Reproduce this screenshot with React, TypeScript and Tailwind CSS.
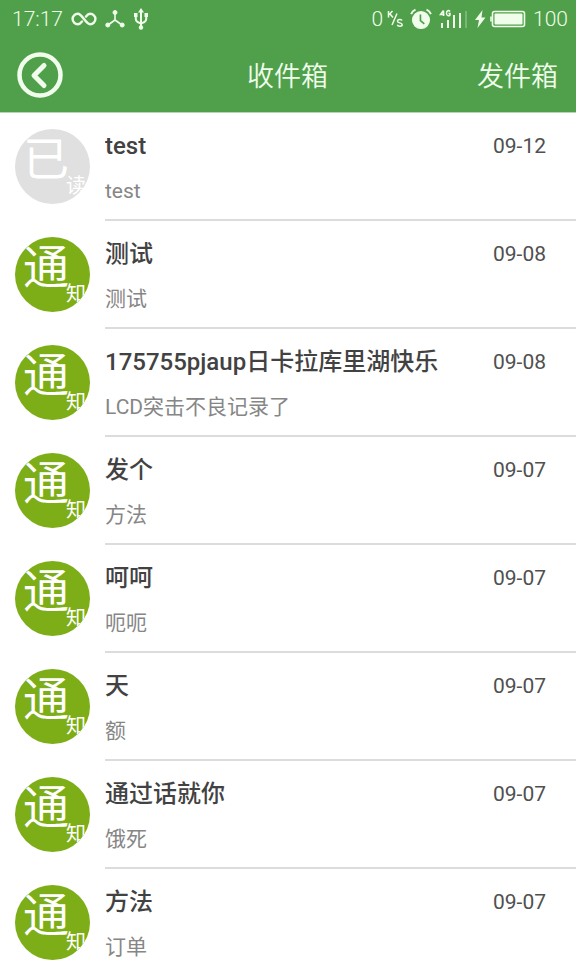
import React from 'react';

interface Message {
  id: number;
  title: string;
  content: string;
  date: string;
  read?: boolean;
}

const messages: Message[] = [
  { id: 1, title: 'test', content: 'test', date: '09-12', read: true },
  { id: 2, title: '测试', content: '测试', date: '09-08' },
  { id: 3, title: '175755pjaup日卡拉库里湖快乐', content: 'LCD突击不良记录了', date: '09-08' },
  { id: 4, title: '发个', content: '方法', date: '09-07' },
  { id: 5, title: '呵呵', content: '呃呃', date: '09-07' },
  { id: 6, title: '天', content: '额', date: '09-07' },
  { id: 7, title: '通过话就你', content: '饿死', date: '09-07' },
  { id: 8, title: '方法', content: '订单', date: '09-07' },
];

const StatusBar: React.FC = () => (
  <div className="flex h-[38px] items-center justify-between pl-3 pr-2 text-[21px] leading-6 font-light text-[#effdea]">
    <div className="flex items-center gap-2">
      <span>17:17</span>
      <svg className="h-4 w-[26px]" viewBox="0 0 26 16" fill="none" stroke="currentColor" strokeWidth="2.4" strokeLinecap="round">
        <path d="M11 10.500C9.700 12.200 8.500 13.200 6.800 13.200a5.200 5.200 0 1 1 0-10.400C11.500 2.800 14.500 13.200 19.200 13.200a5.200 5.200 0 1 0 0-10.400C17.500 2.800 16.300 3.800 15 5.500" />
      </svg>
      <svg className="h-5 w-5" viewBox="0 0 20 20" fill="currentColor" stroke="currentColor">
        <path d="M10 4v7M10 11L3 16M10 11l7 5" fill="none" strokeWidth="1.6" />
        <circle cx="10" cy="3.500" r="2" />
        <circle cx="2.800" cy="16" r="2" />
        <circle cx="17.200" cy="16" r="2" />
      </svg>
      <svg className="h-6 w-4" viewBox="0 0 16 24" fill="none" stroke="currentColor" strokeWidth="2">
        <path d="M8 4v16M2.800 8v4c0 3 2.500 3.500 5.200 4.500M13.200 8v4c0 3-2.500 3.500-5.200 4.500" />
        <path d="M8 1l3 4.500H5zM1 6h3.500v4H1zM11.500 6H15v4h-3.500z" fill="currentColor" stroke="none" />
        <circle cx="8" cy="20.500" r="2.200" fill="currentColor" stroke="none" />
      </svg>
    </div>
    <div className="flex items-center gap-[7px]">
      <div className="flex items-center gap-1">
        <span>0</span>
        <svg className="h-5 w-4" viewBox="0 0 16 20" fill="none" stroke="currentColor" strokeWidth="1.500">
          <path d="M1.500 2v6.500M5.500 2L2 5.700M3 5L6 8.500M5 16L10 4.500" />
          <path d="M15 11.500c-.500-1.500-4.500-1.500-4.500.700 0 2.100 4.700 1.300 4.700 3.500 0 1.900-4.300 2.100-4.900 0" />
        </svg>
      </div>
      <svg className="h-[22px] w-[22px]" viewBox="0 0 20 20" fill="none" stroke="currentColor">
        <circle cx="10" cy="11" r="7.700" fill="currentColor" />
        <path d="M1 5.500C1.800 3.500 3 2.300 5 1.500M19 5.500C18.200 3.500 17 2.300 15 1.500" strokeWidth="1.800" />
        <path d="M9.500 6v5.500l3.500 3" stroke="#50a04b" strokeWidth="1.500" />
      </svg>
      <svg className="h-5 w-7" viewBox="0 0 28 20" fill="none" stroke="currentColor">
        <path d="M4.500 1.500L1.500 5.500h4M4.500 1.500V7M11 2.500C10 1 7.500 1.500 7.500 4.200S10 7.500 11 6V4.500H9.500" strokeWidth="1.500" />
        <path d="M3 14v5M9 11v8M15 6V19M21 4V19" strokeWidth="2" />
        <path d="M27 2v17" strokeWidth="1.500" opacity="0.350" />
      </svg>
      <div className="flex items-center gap-1">
        <svg className="h-5 w-3" viewBox="0 0 12 20" fill="currentColor">
          <path d="M8.500 1L1 11h4L3.500 19 11.500 8.500h-4z" />
        </svg>
        <svg className="h-5 w-9" viewBox="0 0 36 20" fill="none" stroke="currentColor">
          <rect x="2.500" y="2.500" width="32" height="15" rx="2" strokeWidth="1.600" />
          <rect x="4.500" y="4.500" width="28" height="11" rx="1" fill="currentColor" stroke="none" />
          <path d="M1 7.500v5" strokeWidth="1.600" />
        </svg>
      </div>
      <span>100</span>
    </div>
  </div>
);

const Avatar: React.FC<{ read?: boolean }> = ({ read }) => (
  <div
    className={`relative h-[75px] w-[75px] shrink-0 overflow-hidden rounded-full text-white ${
      read ? 'bg-[#e0e0e0]' : 'bg-[#7dae17]'
    }`}
  >
    <span className="block pl-2 pt-1 text-[46px] leading-[52px]">{read ? '已' : '通'}</span>
    <span className="absolute right-1 bottom-1 text-[20px] leading-7">{read ? '读' : '知'}</span>
  </div>
);

const MessageRow: React.FC<{ message: Message }> = ({ message }) => (
  <li className="flex h-[108px] pl-[15px]">
    <div className="pt-4">
      <Avatar read={message.read} />
    </div>
    <div className="ml-[15px] min-w-0 flex-1 border-b-2 border-[#dcdcdc] pt-4 pr-[30px]">
      <div className="flex items-center justify-between">
        <h2 className="truncate text-[24px] leading-[34px] font-medium text-[#424242]">{message.title}</h2>
        <time className="text-[21px] leading-[34px] text-[#505050]">{message.date}</time>
      </div>
      <p className="mt-[14px] truncate text-[21px] leading-7 text-[#868686]">{message.content}</p>
    </div>
  </li>
);

const App: React.FC = () => {
  return (
    <div className="flex h-screen flex-col bg-white font-['Roboto','Noto_Sans_CJK_SC',sans-serif]">
      <header className="shrink-0 border-b border-[#b5d6b1] bg-[#50a04b]">
        <StatusBar />
        <div className="grid h-[74px] grid-cols-[1fr_auto_1fr] items-center pr-[18px] pl-[17px] text-[27px] leading-9 font-[350] text-[#f1fdec]">
          <button type="button" aria-label="返回" className="justify-self-start">
            <svg className="h-[46px] w-[46px]" viewBox="0 0 46 46" fill="none" stroke="currentColor">
              <circle cx="23" cy="23" r="20.500" strokeWidth="4.500" />
              <path d="M27 13.500L17 23.500 27 33.500" strokeWidth="5" strokeLinecap="round" strokeLinejoin="round" />
            </svg>
          </button>
          <h1 className="pt-1">收件箱</h1>
          <button type="button" className="justify-self-end pt-1">
            发件箱
          </button>
        </div>
      </header>
      <main className="min-h-0 flex-1 overflow-y-auto [scrollbar-width:none]">
        <ul>
          {messages.map((message) => (
            <MessageRow key={message.id} message={message} />
          ))}
        </ul>
      </main>
    </div>
  );
};

export default App;
